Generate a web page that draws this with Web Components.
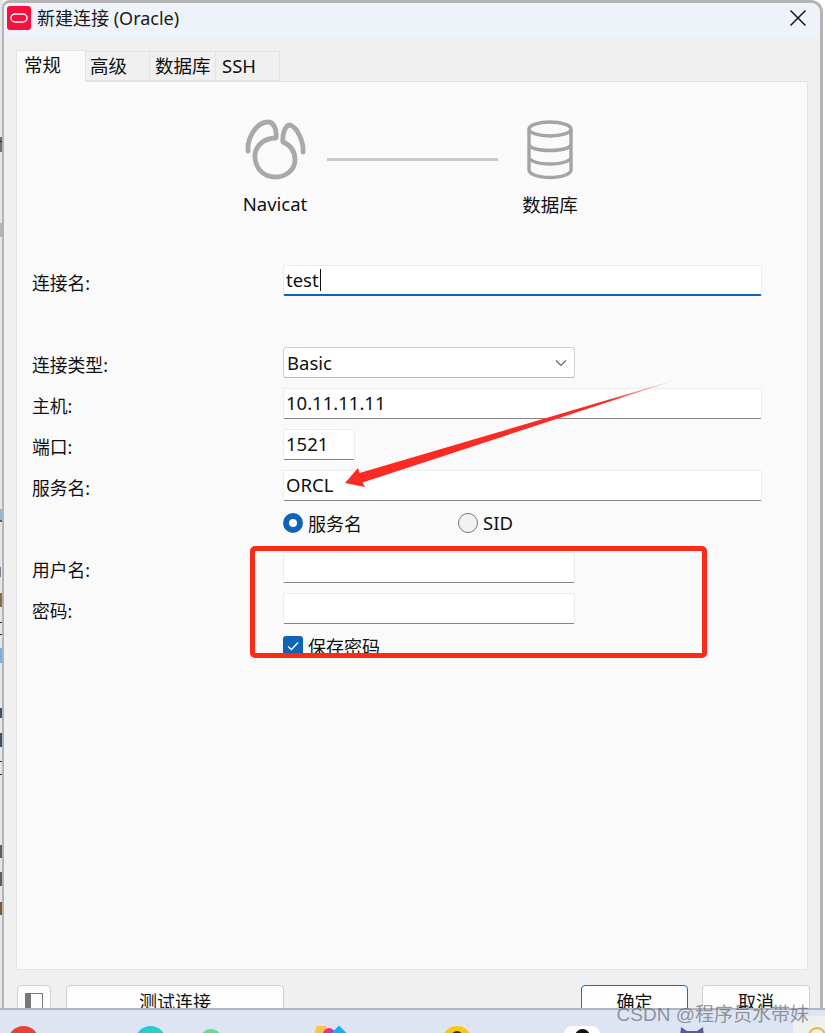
<!DOCTYPE html>
<html><head><meta charset="utf-8">
<style>
html,body{margin:0;padding:0;}
body{width:825px;height:1033px;overflow:hidden;position:relative;background:#fff;font-family:"Noto Sans","Noto Sans CJK SC",sans-serif;font-size:18px;color:#111;display:flex;flex-direction:column;}
</style></head><body>
<desk-area>
  <side-strip></side-strip>
  <app-window title-text="新建连接 (Oracle)">
    <tab-bar></tab-bar>
    <form-pane>
      <conn-stepper></conn-stepper>
      <form-row label="连接名:" style="margin-top:48px"><text-box width="479" focused value="test"></text-box></form-row>
      <form-row label="连接类型:" style="margin-top:51px"><select-box value="Basic"></select-box></form-row>
      <form-row label="主机:" style="margin-top:10px"><text-box width="479" value="10.11.11.11"></text-box></form-row>
      <form-row label="端口:" style="margin-top:10px"><text-box width="72" value="1521"></text-box></form-row>
      <form-row label="服务名:" style="margin-top:10px"><text-box width="479" value="ORCL"></text-box></form-row>
      <radio-row></radio-row>
      <form-row label="用户名:" style="margin-top:19px"><text-box width="292"></text-box></form-row>
      <form-row label="密码:" style="margin-top:10px"><text-box width="292"></text-box></form-row>
      <check-row></check-row>
    </form-pane>
    <foot-bar></foot-bar>
  </app-window>
  <mark-up></mark-up>
</desk-area>
<task-bar></task-bar>
<water-mark></water-mark>
<script>
function def(name, render){
  customElements.define(name, class extends HTMLElement{
    connectedCallback(){
      if(this.shadowRoot) return;
      this.attachShadow({mode:'open'}).innerHTML = render(this);
    }
  });
}
const ui = `font-family:"Noto Sans","Noto Sans CJK SC",sans-serif;`;

def('desk-area', () => `<style>:host{display:flex;height:1008px;position:relative;overflow:hidden;flex:none}</style><slot></slot>`);

const frags = [
 [137,15,'#7d6a70',3],[141,1,'#222',3],[223,14,'#b5b5b5',3],
 [509,13,'#7fbce6',2],[520,2,'#6b5a3a',3],[567,10,'#8a7a9a',1],[593,14,'#8a6a4a',3],
 [622,1,'#222',3],[634,1,'#222',3],[648,15,'#6db5e8',2],
 [708,10,'#40506a',2],[733,14,'#40506a',3],[761,1,'#222',3],[774,1,'#222',3],
 [845,13,'#55606a',3],[872,14,'#55606a',3],[902,13,'#7a5a3a',2]
];
def('side-strip', () => `<style>
:host{display:block;position:absolute;left:0;top:0;width:3px;height:100%;background:#e6e6e6}
i{position:absolute;left:0;display:block}
</style>` + frags.map(f=>`<i style="top:${f[0]}px;height:${f[1]}px;background:${f[2]};width:${f[3]}px"></i>`).join(''));

def('app-window', el => `<style>
:host{display:flex;flex-direction:column;margin-left:2px;width:821px;height:1042px;flex:none;box-sizing:border-box;
  border:solid #b4b4b4;border-width:3px 3px 0 2px;border-top-left-radius:8px;border-top-right-radius:12px;background:#f0f0f0;overflow:hidden;position:relative}
.title{height:34px;box-sizing:border-box;padding-bottom:4px;background:#eef3fa;display:flex;align-items:center;flex:none}
.logo{width:24px;height:24px;margin-left:3px;flex:none;border-radius:3px;background:#f80f3f;display:flex;align-items:center;justify-content:center}
.t{margin-left:6px;font-size:18px;color:#1a1a1a;${ui}flex:1;position:relative;top:-1px}
.x{width:18px;height:18px;margin-right:13px;flex:none;display:block}
</style>
<div class="title">
  <div class="logo"><svg width="18" height="10" viewBox="0 0 18 10"><rect x="1" y="1" width="16" height="8" rx="4" fill="none" stroke="#fff" stroke-width="1.4"/></svg></div>
  <div class="t">${el.getAttribute('title-text')}</div>
  <svg class="x" viewBox="0 0 18 18"><path d="M1.5 1.5L16.5 16.5M16.5 1.5L1.5 16.5" stroke="#1a1a1a" stroke-width="1.5" fill="none"/></svg>
</div>
<slot></slot>`);

def('tab-bar', () => `<style>
:host{display:flex;align-items:flex-end;height:44px;padding-left:12px;flex:none;font-size:18.500px;${ui}color:#111}
span{display:block;box-sizing:border-box;height:30px;border:1px solid #e3e3e3;border-left:0;padding-left:4px;line-height:28px}
.a{height:32px;width:70px;background:#fafafa;border-left:1px solid #e3e3e3;border-bottom:0;padding-left:7px;position:relative;top:1px;z-index:1}
</style>
<span class="a">常规</span><span style="width:64px">高级</span><span style="width:66px;padding-left:5px">数据库</span><span style="width:64px;padding-left:6px">SSH</span>`);

def('form-pane', () => `<style>
:host{display:block;box-sizing:border-box;margin-left:12px;width:792px;height:889px;flex:none;background:#fafafa;border:1px solid #e3e3e3;padding-top:33px}
</style><slot></slot>`);

const navicat = `<svg width="70" height="70" viewBox="240 115 70 70" fill="none" stroke="#a9a9a9" stroke-width="4.8" stroke-linecap="round" stroke-linejoin="round">
<path d="M248 151C247 137 257 122 268 122C274 122 277 130 276 138C262 138 254 148 255 158C256 170 265 177 275 177C286 177 295 170 295 160C295 150 290 145 283 142C282 135 285 125 290 125C297 127 304 142 303 152"/></svg>`;
const db = `<svg width="70" height="70" viewBox="515 115 70 70" fill="none" stroke="#a4a4a4" stroke-width="3.4">
<ellipse cx="550" cy="129" rx="21" ry="7"/><path d="M529 129V170C529 174 538 177.500 550 177.500C562 177.500 571 174 571 170V129M529 144C529 148 538 150.500 550 150.500C562 150.500 571 148 571 144M529 157C529 161 538 164 550 164C562 164 571 161 571 157"/></svg>`;

def('conn-stepper', () => `<style>
:host{display:flex;align-items:flex-start;margin-left:206px;font-size:18.500px;${ui}color:#111}
.n{width:104px;display:flex;flex-direction:column;align-items:center;flex:none}
.n div{line-height:24px;margin-top:7px}
.l{width:171px;height:3px;background:#c9c9c9;margin-top:43px;flex:none}
</style>
<div class="n">${navicat}<div>Navicat</div></div><div class="l"></div><div class="n">${db}<div style="margin-top:8px">数据库</div></div>`);

def('form-row', el => `<style>
:host{display:flex;align-items:flex-start;padding-left:15px;height:31px;font-size:17.800px;${ui}color:#111}
.lb{width:251px;flex:none;line-height:37px}
</style><div class="lb">${el.getAttribute('label')}</div><slot></slot>`);

def('text-box', el => {
  const f = el.hasAttribute('focused');
  return `<style>
:host{display:block;box-sizing:border-box;height:31px;width:${el.getAttribute('width')}px;background:#fff;border:1px solid #ececec;border-bottom:${f?'2px solid #0f63b8':'1px solid #858585'};border-radius:2px;font-size:18.500px;${ui}color:#111;padding-left:2px;line-height:28px}
.c{display:inline-block;width:1px;height:22px;background:#111;vertical-align:-4px;margin-left:1px}
</style>${el.getAttribute('value')||''}${f?'<span class="c"></span>':''}`;
});

def('select-box', el => `<style>
:host{display:flex;align-items:center;justify-content:space-between;box-sizing:border-box;height:31px;width:292px;background:#fff;border:1px solid #d0d0d0;border-bottom-color:#b8b8b8;border-radius:3px;font-size:18.500px;${ui}color:#111;padding:0 7px 0 3px}
</style><span>${el.getAttribute('value')}</span><svg width="12" height="8" viewBox="0 0 12 8"><path d="M1 1.500L6 6.500L11 1.500" stroke="#666" stroke-width="1.200" fill="none"/></svg>`);

def('radio-row', () => `<style>
:host{display:flex;align-items:center;height:21px;margin-top:11px;padding-left:266px;font-size:18px;${ui}color:#111}
.o{width:20px;height:20px;border-radius:50%;box-sizing:border-box;flex:none}
.on{border:6px solid #0f63b8;background:#fff}
.off{border:1px solid #777;background:#f2f2f2}
span{margin-left:5px}
</style><div class="o on"></div><span style="width:150px">服务名</span><div class="o off"></div><span style="font-size:18.500px">SID</span>`);

def('check-row', () => `<style>
:host{display:flex;align-items:center;height:20px;margin-top:12px;padding-left:266px;font-size:18px;${ui}color:#111}
.b{width:20px;height:20px;border-radius:3px;background:#0f63b8;flex:none;display:flex;align-items:center;justify-content:center}
span{margin-left:5px}
</style><div class="b"><svg width="12" height="10" viewBox="0 0 12 10"><path d="M1 5.500L4.500 8.500L11 1.500" stroke="#fff" stroke-width="1.300" fill="none"/></svg></div><span>保存密码</span>`);

def('foot-bar', () => `<style>
:host{display:flex;flex:none;padding:15px 0 0 13px;height:50px;font-size:18px;${ui}color:#111}
button{all:unset;box-sizing:border-box;height:34px;background:#fdfdfd;border:1px solid #d0d0d0;border-radius:4px;text-align:center;line-height:30px;flex:none;display:block}
.ok{border-color:#0a74c9}
.i{display:flex;justify-content:center;padding-top:7px}
</style>
<button class="i" style="width:34px"><svg width="18" height="20" viewBox="0 0 18 20" style="display:block"><rect x=".5" y=".5" width="17" height="19" fill="none" stroke="#777"/><rect x="1" y="1" width="5" height="18" fill="#777"/></svg></button>
<button style="width:218px;margin-left:15px">测试连接</button>
<button class="ok" style="width:107px;margin-left:297px">确定</button>
<button style="width:108px;margin-left:14px">取消</button>`);

def('mark-up', () => `<style>
:host{display:block;position:absolute;inset:0;pointer-events:none}
.box{position:absolute;left:250px;top:546px;width:457px;height:112px;box-sizing:border-box;border:5px solid #fe2a18;border-radius:5px}
svg{position:absolute;left:0;top:0}
</style>
<div class="box"></div>
<svg width="825" height="1008"><defs><linearGradient id="g" gradientUnits="userSpaceOnUse" x1="677" y1="380" x2="610" y2="400"><stop offset="0" stop-color="#ff5040" stop-opacity="0.15"/><stop offset="1" stop-color="#fb2a22"/></linearGradient></defs>
<polygon points="677,379.500 359.500,473 358,468 345,483 365,487 362.500,482.500" fill="url(#g)"/></svg>`);

def('task-bar', () => `<style>
:host{display:block;position:relative;flex:none;height:25px;background:#dde5f5;border-top:2px solid #b4b6be;box-sizing:border-box;overflow:hidden}
i{position:absolute;display:block}
</style>
<i style="left:8px;top:16px;width:31px;height:31px;border-radius:50%;background:#ea4335"></i>
<i style="left:135px;top:16px;width:31px;height:31px;border-radius:50%;background:linear-gradient(90deg,#2bc4ea,#2cd0b4)"></i>
<i style="left:200px;top:19px;width:22px;height:22px;border-radius:50%;background:#5fe38a"></i>
<i style="left:315px;top:16px;width:10px;height:12px;background:#f8c74a;transform:skewX(-15deg)"></i>
<i style="left:323px;top:18px;width:12px;height:12px;border-radius:50%;background:#ef2c86"></i>
<i style="left:333px;top:18px;width:12px;height:12px;background:#12b3ee;transform:rotate(45deg)"></i>
<i style="left:442px;top:16px;width:30px;height:30px;border-radius:50%;background:#f6c90e"></i>
<i style="left:451px;top:21px;width:12px;height:12px;border-radius:50%;background:#333"></i>
<i style="left:564px;top:16px;width:36px;height:30px;border-radius:8px;background:#fff"></i>
<i style="left:575px;top:19px;width:15px;height:15px;border-radius:50%;background:#111"></i>
<svg style="position:absolute;left:678px;top:17px" width="28" height="10" viewBox="0 0 28 10"><path d="M2 10L3 0L9 4H19L25 0L26 10Z" fill="#5b5a9e"/></svg>
<i style="left:793px;top:6px;width:32px;height:20px;background:#eef0ef"></i>
<i style="left:808px;top:17px;width:18px;height:18px;border-radius:50%;border:2px solid #e2b93b;box-sizing:border-box"></i>`);

def('water-mark', () => `<style>
:host{display:block;position:absolute;right:16px;top:1003px;font-size:19px;font-family:"Liberation Sans","Noto Sans CJK SC",sans-serif;color:rgba(90,90,90,.62);white-space:nowrap;line-height:24px;pointer-events:none}
</style>CSDN @程序员水带妹`);
</script>
</body></html>
